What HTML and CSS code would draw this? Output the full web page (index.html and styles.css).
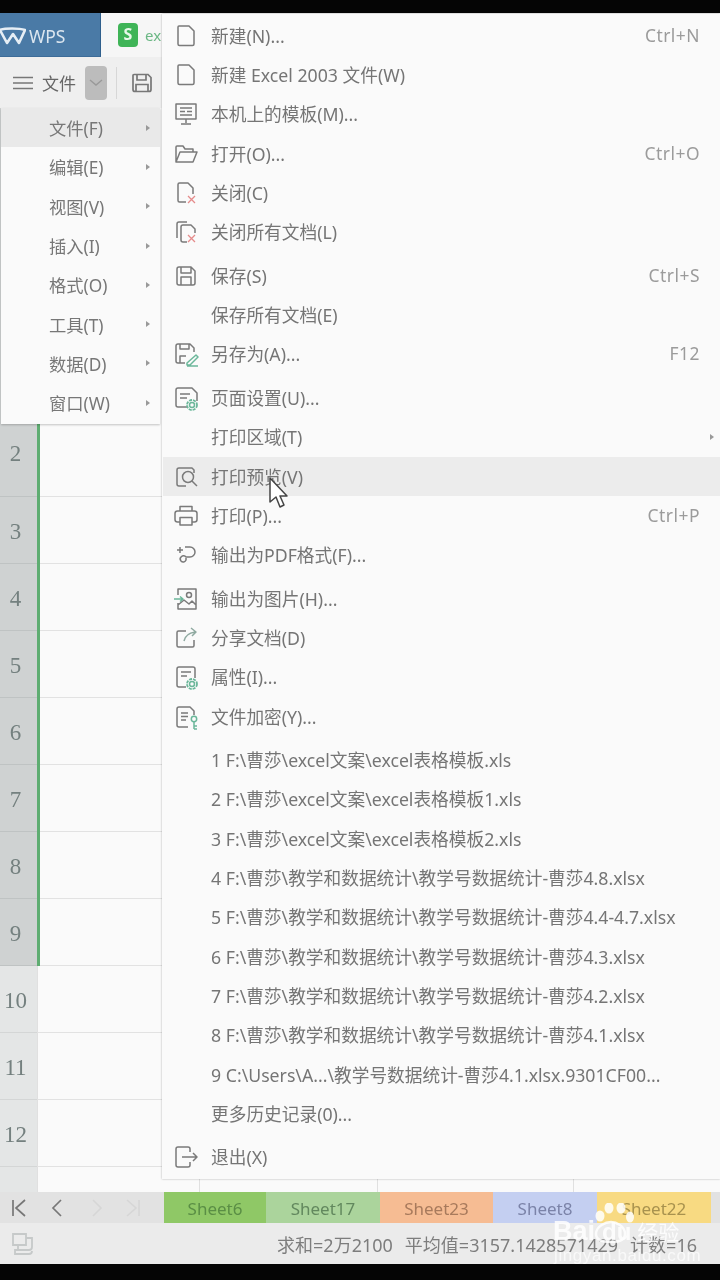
FILE: index.html
```html
<!DOCTYPE html>
<html lang="zh-CN">
<head>
<meta charset="utf-8">
<title>WPS 文件菜单</title>
<link rel="stylesheet" href="styles.css">
</head>
<body>
<div class="screen">
  <div class="bar-black top"></div>
  <div class="titlebar">
    <div class="wps"><svg class="wps-logo" width="27" height="18" viewBox="0 0 27 18"><path d="M1 3c5-2 19-2 25 0l-6 13-6-9-6 9z" fill="none" stroke="#e6eef5" stroke-width="2.600" stroke-linejoin="round"/></svg><span>WPS</span></div>
    <div class="doc-tab"><span class="s-icon">S</span><span class="doc-name">ex</span></div>
  </div>
  <div class="toolbar">
    <svg class="tb-burger" width="20" height="14" viewBox="0 0 20 14"><path d="M0 1.500h20M0 7h20M0 12.500h20" stroke="#777" stroke-width="1.600"/></svg>
    <span class="tb-file">文件</span>
    <div class="tb-drop"><svg width="14" height="8" viewBox="0 0 14 8"><path d="M1 1l6 5 6-5" fill="none" stroke="#999" stroke-width="1.400"/></svg></div>
    <div class="tb-div"></div>
    <svg width="22" height="22" viewBox="0 0 22 22"><path d="M3 2.500h14l3 3v12a2 2 0 0 1-2 2H4a2 2 0 0 1-2-2V3.500a1 1 0 0 1 1-1zM6 3v5h9V3M5 19.500v-7h12v7" fill="none" stroke="#777" stroke-width="1.700"/></svg>
  </div>

  <div class="sheet">
    <div class="row-spacer"><div class="rh"></div></div>
    <div class="row first sel"><div class="rh">2</div><div class="cell"></div></div>
    <div class="row sel"><div class="rh">3</div><div class="cell"></div></div>
    <div class="row sel"><div class="rh">4</div><div class="cell"></div></div>
    <div class="row sel"><div class="rh">5</div><div class="cell"></div></div>
    <div class="row sel"><div class="rh">6</div><div class="cell"></div></div>
    <div class="row sel"><div class="rh">7</div><div class="cell"></div></div>
    <div class="row sel"><div class="rh">8</div><div class="cell"></div></div>
    <div class="row sel"><div class="rh">9</div><div class="cell"></div></div>
    <div class="row"><div class="rh">10</div><div class="cell"></div></div>
    <div class="row"><div class="rh">11</div><div class="cell"></div></div>
    <div class="row"><div class="rh">12</div><div class="cell"></div></div>
    <div class="row-end"><div class="rh"></div><div class="c c1"></div><div class="c c2"></div><div class="c c3"></div><div class="c c4"></div></div>
  </div>

  <div class="tabs">
    <div class="tab-nav">
      <svg width="16" height="20" viewBox="0 0 16 20"><path d="M2 2v16M14 2l-9 8 9 8" fill="none" stroke="#777" stroke-width="1.700"/></svg>
      <svg class="nav-2" width="12" height="20" viewBox="0 0 12 20"><path d="M10 2l-8 8 8 8" fill="none" stroke="#777" stroke-width="1.700"/></svg>
      <svg class="nav-3" width="12" height="20" viewBox="0 0 12 20"><path d="M2 2l8 8-8 8" fill="none" stroke="#d6d6d6" stroke-width="1.600"/></svg>
      <svg class="nav-4" width="16" height="20" viewBox="0 0 16 20"><path d="M2 2l9 8-9 8M14 2v16" fill="none" stroke="#d6d6d6" stroke-width="1.600"/></svg>
    </div>
    <div class="tab t1">Sheet6</div>
    <div class="tab t2">Sheet17</div>
    <div class="tab t3">Sheet23</div>
    <div class="tab t4">Sheet8</div>
    <div class="tab t5">Sheet22</div>
  </div>
  <div class="status">
    <svg width="26" height="24" viewBox="0 0 26 24"><path d="M3 2h13v11H3zM16 6h6v9a3 3 0 0 1-3 3H5v4h14a3 3 0 0 0 3-3M8 13v5" fill="none" stroke="#c6c9c9" stroke-width="1.800"/></svg>
    <div class="stat-text"><span>求和=2万2100</span><span>平均值=3157.1428571429</span><span>计数=16</span></div>
  </div>
  <div class="bar-black bottom"></div>

  <!-- left dropdown -->
  <div class="menu-left">
    <div class="ml-row on"><span>文件(F)</span><i></i></div>
    <div class="ml-row"><span>编辑(E)</span><i></i></div>
    <div class="ml-row"><span>视图(V)</span><i></i></div>
    <div class="ml-row"><span>插入(I)</span><i></i></div>
    <div class="ml-row"><span>格式(O)</span><i></i></div>
    <div class="ml-row"><span>工具(T)</span><i></i></div>
    <div class="ml-row"><span>数据(D)</span><i></i></div>
    <div class="ml-row"><span>窗口(W)</span><i></i></div>
  </div>

  <!-- file submenu -->
  <div class="menu-file">
    <div class="grp">
      <div class="mi"><svg class="ic" viewBox="0 0 26 26"><path d="M6 3h10l5 5v13a1.500 1.500 0 0 1-1.500 1.500h-13A1.500 1.500 0 0 1 5 21V4a1 1 0 0 1 1-1z"/></svg><span class="lb">新建(N)...</span><span class="sc">Ctrl+N</span></div>
      <div class="mi"><svg class="ic" viewBox="0 0 26 26"><path d="M6 3h10l5 5v13a1.500 1.500 0 0 1-1.500 1.500h-13A1.500 1.500 0 0 1 5 21V4a1 1 0 0 1 1-1z"/></svg><span class="lb">新建 Excel 2003 文件(W)</span></div>
      <div class="mi"><svg class="ic" viewBox="0 0 26 26"><path d="M3 3h20v15H3zM13 18v4M8 23h10M7 7h12M7 10.500h5M14 10.500h5M7 14h12"/></svg><span class="lb">本机上的模板(M)...</span></div>
      <div class="mi"><svg class="ic" viewBox="0 0 26 26"><path d="M3 21V6a1 1 0 0 1 1-1h6l2 3h8v3M3 21h17l4-10H7z"/></svg><span class="lb">打开(O)...</span><span class="sc">Ctrl+O</span></div>
      <div class="mi"><svg class="ic" viewBox="0 0 26 26"><path d="M13 22H6.500A1.500 1.500 0 0 1 5 20.500V4.500A1.500 1.500 0 0 1 6.500 3H15l5 5v6"/><path class="red" d="M15 16l7 7M22 16l-7 7"/></svg><span class="lb">关闭(C)</span></div>
      <div class="mi"><svg class="ic" viewBox="0 0 26 26"><path d="M4 19V5a2 2 0 0 1 2-2h8"/><path d="M14 23H10a2 2 0 0 1-2-2V8a2 2 0 0 1 2-2h8l4 4v4"/><path class="red" d="M15 16l7 7M22 16l-7 7"/></svg><span class="lb">关闭所有文档(L)</span></div>
    </div>
    <div class="grp">
      <div class="mi"><svg class="ic" viewBox="0 0 26 26"><path d="M6 4h12l4 4v12a2 2 0 0 1-2 2H6a2 2 0 0 1-2-2V6a2 2 0 0 1 2-2zM8 4v6h10V4M8 22v-8h10v8"/></svg><span class="lb">保存(S)</span><span class="sc">Ctrl+S</span></div>
      <div class="mi"><span class="ic-blank"></span><span class="lb">保存所有文档(E)</span></div>
      <div class="mi"><svg class="ic" viewBox="0 0 26 26"><path d="M12 22H5a2 2 0 0 1-2-2V5a2 2 0 0 1 2-2h12l4 4v4M7 3v5h9V3M7 22v-7h6"/><path class="grn" d="M14 22l9-8 2 2-8 8h-3zM14 25h11"/></svg><span class="lb">另存为(A)...</span><span class="sc">F12</span></div>
    </div>
    <div class="grp">
      <div class="mi"><svg class="ic" viewBox="0 0 26 26"><path d="M14 22H5a2 2 0 0 1-2-2V5a2 2 0 0 1 2-2h14l5 5v8M7 9h10M7 13h7"/><circle class="grn" cx="19" cy="20" r="2.500"/><circle class="grn thick" cx="19" cy="20" r="5"/></svg><span class="lb">页面设置(U)...</span></div>
      <div class="mi"><span class="ic-blank"></span><span class="lb">打印区域(T)</span><i class="arrow"></i></div>
      <div class="mi hover"><svg class="ic" viewBox="0 0 26 26"><path d="M13 22H6a2 2 0 0 1-2-2V6a2 2 0 0 1 2-2h13l2 2v3"/><circle cx="15" cy="13" r="5.500"/><path d="M19 17l5 5"/></svg><span class="lb">打印预览(V)</span></div>
      <div class="mi"><svg class="ic" viewBox="0 0 26 26"><path d="M7 8V3.500h12V8M7 19H4.500A2.500 2.500 0 0 1 2 16.500V10.500A2.500 2.500 0 0 1 4.500 8h17a2.500 2.500 0 0 1 2.500 2.500v6a2.500 2.500 0 0 1-2.500 2.500H19M7 14.500h12v7.500H7z"/></svg><span class="lb">打印(P)...</span><span class="sc">Ctrl+P</span></div>
      <div class="mi"><svg class="ic" viewBox="0 0 26 26"><path d="M12 5h5a5 5 0 0 1 0 10h-4a3 3 0 0 0-5 4 3 3 0 0 0 5-1v-2M4 8h6M7 5v6"/></svg><span class="lb">输出为PDF格式(F)...</span></div>
    </div>
    <div class="grp">
      <div class="mi"><svg class="ic" viewBox="0 0 26 26"><path d="M5 9V3h18v20H5v-6M5 19l6-5 5 4 3-3 4 4"/><circle cx="16" cy="9" r="2.500"/><path class="grn" d="M1 13h8M7 10.500l3 2.500-3 2.500"/></svg><span class="lb">输出为图片(H)...</span></div>
      <div class="mi"><svg class="ic" viewBox="0 0 26 26"><path d="M13 6H5.500A1.500 1.500 0 0 0 4 7.500v13A1.500 1.500 0 0 0 5.500 22h14a1.500 1.500 0 0 0 1.500-1.500V15"/><path class="grn-soft" d="M11 16c1-5 5-8 11-9M18 3l5 4-4 4"/></svg><span class="lb">分享文档(D)</span></div>
      <div class="mi"><svg class="ic" viewBox="0 0 26 26"><path d="M13 23H6a2 2 0 0 1-2-2V5a2 2 0 0 1 2-2h14a2 2 0 0 1 2 2v9M8 8h10M8 12h6"/><circle class="grn" cx="19" cy="20" r="2.500"/><circle class="grn thick" cx="19" cy="20" r="5"/></svg><span class="lb">属性(I)...</span></div>
      <div class="mi"><svg class="ic" viewBox="0 0 26 26"><path d="M15 23H6a2 2 0 0 1-2-2V5a2 2 0 0 1 2-2h11l4 4v4M8 9h7M8 12.500h7M8 16h5"/><circle class="grn" cx="21" cy="15" r="2.700"/><path class="grn" d="M21 18v7M21 22h3M21 25h3"/></svg><span class="lb">文件加密(Y)...</span></div>
    </div>
    <div class="grp">
      <div class="mi"><span class="ic-blank"></span><span class="lb">1 F:\曹莎\excel文案\excel表格模板.xls</span></div>
      <div class="mi"><span class="ic-blank"></span><span class="lb">2 F:\曹莎\excel文案\excel表格模板1.xls</span></div>
      <div class="mi"><span class="ic-blank"></span><span class="lb">3 F:\曹莎\excel文案\excel表格模板2.xls</span></div>
      <div class="mi"><span class="ic-blank"></span><span class="lb">4 F:\曹莎\教学和数据统计\教学号数据统计-曹莎4.8.xlsx</span></div>
      <div class="mi"><span class="ic-blank"></span><span class="lb">5 F:\曹莎\教学和数据统计\教学号数据统计-曹莎4.4-4.7.xlsx</span></div>
      <div class="mi"><span class="ic-blank"></span><span class="lb">6 F:\曹莎\教学和数据统计\教学号数据统计-曹莎4.3.xlsx</span></div>
      <div class="mi"><span class="ic-blank"></span><span class="lb">7 F:\曹莎\教学和数据统计\教学号数据统计-曹莎4.2.xlsx</span></div>
      <div class="mi"><span class="ic-blank"></span><span class="lb">8 F:\曹莎\教学和数据统计\教学号数据统计-曹莎4.1.xlsx</span></div>
      <div class="mi"><span class="ic-blank"></span><span class="lb">9 C:\Users\A...\教学号数据统计-曹莎4.1.xlsx.9301CF00...</span></div>
      <div class="mi"><span class="ic-blank"></span><span class="lb">更多历史记录(0)...</span></div>
    </div>
    <div class="grp">
      <div class="mi"><svg class="ic" viewBox="0 0 26 26"><path d="M17 8V5a2 2 0 0 0-2-2H5a2 2 0 0 0-2 2v16a2 2 0 0 0 2 2h10a2 2 0 0 0 2-2v-3M9 13h15M20 9l4 4-4 4"/></svg><span class="lb">退出(X)</span></div>
    </div>
  </div>

  <!-- mouse cursor -->
  <svg class="cursor" width="20" height="32" viewBox="0 0 20 32"><path d="M2 1v24l6-5 4 10 4-2-4-9h7z" fill="#fff" stroke="#444" stroke-width="1.500" stroke-linejoin="round"/></svg>

  <!-- watermark -->
  <div class="mark">
    <svg class="paw" width="44" height="46" viewBox="0 0 44 46"><g fill="#fff" fill-opacity=".85"><ellipse cx="6" cy="13" rx="4.500" ry="5.500"/><ellipse cx="15" cy="5" rx="4.500" ry="5.500"/><ellipse cx="27" cy="5" rx="4.500" ry="5.500"/><ellipse cx="36" cy="14" rx="4" ry="5.500"/></g><path d="M2 31c0-8 10-12 15-12s14 4 14 12c0 6-6 8-14 8S2 37 2 31z" fill="none" stroke="#fff" stroke-opacity=".85" stroke-width="2.500"/></svg>
    <div class="mark-main"><span class="mark-en">Bai</span><span class="mark-du">du</span><span class="mark-cn">经验</span></div>
    <div class="mark-url">jingyan.baidu.com</div>
  </div>
</div>
</body>
</html>
```

FILE: styles.css
```css
* { box-sizing: border-box; }
html, body { margin: 0; padding: 0; background: #000; }
body { font-family: "Noto Sans", "Noto Sans CJK SC", sans-serif; color: #757575; }

.screen {
  position: relative;
  width: 720px;
  height: 1280px;
  overflow: hidden;
  display: flex;
  flex-direction: column;
  background: #000;
  filter: blur(.6px);
}
.bar-black { background: #050505; flex: none; }
.bar-black.top { height: 13px; }
.bar-black.bottom { height: 16px; }

.titlebar { height: 44px; flex: none; display: flex; background: #f3f3f3; }
.wps { width: 101px; background: #4a7aa6; color: #dce6ef; display: flex; align-items: center; font-size: 17.500px; gap: 3px; padding-top: 2px; border-right: 1px solid #2f5f8c; border-bottom: 1px solid #3d6c99; }
.wps-logo { margin-left: -1px; }
.doc-tab { flex: 1; display: flex; align-items: center; padding-left: 17px; gap: 7px; background: #f6f6f6; }
.s-icon { width: 20px; height: 24px; border-radius: 4px; background: #3fb457; color: #e9f8ea; font-size: 16px; font-weight: 700; line-height: 23px; text-align: center; }
.doc-name { color: #6bb784; font-size: 15px; }

.toolbar { height: 51px; flex: none; display: flex; align-items: center; background: #efefef; padding-left: 13px; }
.tb-file { margin-left: 9px; font-size: 17px; color: #666; width: 35px; white-space: nowrap; }
.tb-drop { margin-left: 8px; width: 22px; height: 34px; border-radius: 4px; background: #bcbcbc; display: flex; align-items: center; justify-content: center; }
.tb-div { margin: 0 14px 0 9px; width: 1px; height: 32px; background: #d7d7d7; }

.sheet { flex: 1; min-height: 0; display: flex; flex-direction: column; background: #fafafa; }
.row-spacer { flex: 1; display: flex; }
.row-spacer .rh { background: #cfd2d2; }
.row { height: 67px; flex: none; display: flex; }
.row.first { height: 90px; }
.rh { width: 37px; flex: none; background: #e4e6e6; color: #74807f; font-family: "Liberation Serif", serif; font-size: 23px; display: flex; align-items: center; justify-content: center; padding: 4px 6px 0 0; }
.row .rh { border-bottom: 1.500px solid #d4d6d6; }
.row.sel .rh { background: #cfd2d2; border-bottom-color: #bfc3c3; }
.cell { flex: 1; border-left: 1.500px solid #e0e0e0; border-bottom: 1.500px solid #e2e2e2; }
.row.sel .cell { margin-left: 3px; border-left: 0; box-shadow: -3px 0 0 #5fad72; }
.row-end { height: 25px; flex: none; display: flex; }
.c { height: 100%; border-left: 1.500px solid #e0e0e0; }
.c1 { width: 162px; } .c2 { width: 178px; } .c3 { width: 196px; } .c4 { flex: 1; }

.tabs { height: 31px; flex: none; display: flex; background: #e2e2e2; }
.tab-nav { width: 164px; display: flex; align-items: center; padding-left: 11px; }
.nav-2 { margin-left: 24px; }
.nav-3 { margin-left: 28px; }
.nav-4 { margin-left: 22px; }
.tab { display: flex; align-items: center; justify-content: center; font-size: 17px; padding-top: 1px; }
.t1 { width: 102px; background: #8fc866; color: #5a8e45; }
.t2 { width: 114px; background: #abd49c; color: #62885e; }
.t3 { width: 113px; background: #f6bc93; color: #a87a5c; }
.t4 { width: 104px; background: #c4cff1; color: #7b83a8; }
.t5 { width: 114px; background: #f8da82; color: #a8924e; }

.status { height: 41px; flex: none; display: flex; align-items: center; background: #ebebeb; padding: 0 23px 0 10px; justify-content: space-between; }
.stat-text { display: flex; gap: 12px; font-size: 18px; color: #7d7d7d; white-space: nowrap; }

.menu-left {
  position: absolute; left: 1px; top: 108px; width: 159px; height: 316px;
  background: #fafafa;
  box-shadow: 0 1px 2px rgba(0,0,0,.22);
}
.ml-row { height: 39.300px; display: flex; align-items: center; padding-left: 48px; font-size: 17.300px; color: #777; }
.ml-row span { flex: 1; }
.ml-row i { width: 0; height: 0; margin-right: 10px; border-left: 4px solid #999; border-top: 3px solid transparent; border-bottom: 3px solid transparent; }
.ml-row.on { background: #e9e9e9; }

.menu-file {
  position: absolute; left: 162px; top: 14px; right: 0; height: 1165px;
  padding-top: 2px;
  background: #fafafa;
  box-shadow: 0 0 2px rgba(0,0,0,.3);
  display: flex; flex-direction: column; gap: 4.300px;
}
.mi { height: 39.300px; display: flex; align-items: center; padding-left: 11px; font-size: 17.700px; color: #757575; white-space: nowrap; }
.mi.hover { background: #ececec; margin-left: 1px; padding-left: 10px; }
.ic { width: 26px; height: 26px; flex: none; fill: none; stroke: #7a7a7a; stroke-width: 1.500; stroke-linejoin: round; }
.ic-blank { width: 26px; flex: none; }
.ic .red { stroke: #e58b8b; stroke-width: 1.300; }
.ic .grn { stroke: #6bb79a; stroke-width: 1.500; }
.ic .thick { stroke-width: 1.800; stroke-dasharray: 3 1; }
.ic .grn-soft { stroke: #8fa9a0; }
.lb { margin-left: 12px; flex: 1; padding-bottom: 2px; }
.sc { margin-right: 20px; color: #9b9b9b; font-size: 17.400px; letter-spacing: .5px; padding-bottom: 2px; }
.arrow { width: 0; height: 0; margin-right: 6px; border-left: 4px solid #999; border-top: 3px solid transparent; border-bottom: 3px solid transparent; }

.cursor { position: absolute; left: 268px; top: 477px; }

.mark { position: absolute; left: 553px; top: 1200px; width: 140px; height: 70px; color: #fff; }
.paw { position: absolute; left: 41px; top: 3px; }
.mark-main { position: absolute; left: 0; top: 16px; display: flex; align-items: baseline; font-family: "Liberation Sans", sans-serif; }
.mark-en { font-size: 27px; font-weight: 700; opacity: .85; }
.mark-du { font-size: 24px; font-weight: 700; opacity: .85; margin-left: 7px; }
.mark-cn { font-size: 21px; margin-left: 6px; opacity: .85; font-family: "Noto Sans CJK SC", sans-serif; }
.mark-url { position: absolute; left: 1px; top: 46px; font-family: "Liberation Sans", sans-serif; font-size: 17px; letter-spacing: .6px; opacity: .7; white-space: nowrap; }
```
